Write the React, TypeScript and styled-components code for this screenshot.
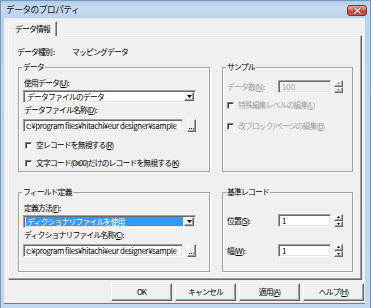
import React from "react";
import styled, { createGlobalStyle } from "styled-components";

const FONT = `"Noto Sans CJK JP", "Noto Sans", sans-serif`;

const GlobalStyle = createGlobalStyle`
  html, body { margin: 0; padding: 0; }
  body {
    background: #ffffff;
    font-family: ${FONT};
  }
`;

const Window = styled.div`
  box-sizing: border-box;
  width: 371px;
  height: 308px;
  display: flex;
  flex-direction: column;
  border: 1px solid #7a96b4;
  border-bottom: none;
  background: linear-gradient(180deg, #b1cbe8 0px, #c6dbf1 7px, #bcd3ec 17px, #c3d8ef 100%);
  font-family: ${FONT};
  color: #000;
`;

const TitleBar = styled.div`
  height: 17px;
  flex: none;
  display: flex;
  align-items: center;
  justify-content: space-between;
  padding: 0 3px 0 5px;
`;

const Title = styled.span`
  font-size: 8.7px;
  letter-spacing: -0.5px;
  line-height: 12px;
  color: #111;
`;

const CloseButton = styled.div`
  box-sizing: border-box;
  width: 20px;
  height: 11px;
  margin-top: 2px;
  border: 1px solid #76322a;
  border-radius: 3px;
  background: linear-gradient(180deg, #eaa799 0%, #d77767 45%, #c2412f 55%, #cf6450 100%);
  display: flex;
  align-items: center;
  justify-content: center;
`;

const Client = styled.div`
  flex: 1;
  margin: 0 5px 5px 3px;
  background: #f0f0f0;
  display: flex;
  flex-direction: column;
  padding: 3px 1px 0 4px;
  box-shadow: 0 1px 0 #3d8db0, inset 1px 1px 0 #e4eef8;
`;

const TabStrip = styled.div`
  display: flex;
  height: 15px;
  margin-bottom: -1px;
  position: relative;
  z-index: 1;
`;

const Tab = styled.div`
  box-sizing: border-box;
  width: 49px;
  height: 15px;
  background: #f0f0f0;
  border-style: solid;
  border-width: 1px 1px 0 1px;
  border-color: #ffffff #696969 transparent #ffffff;
  box-shadow: inset -1px 0 0 #a0a0a0;
  display: flex;
  align-items: center;
  justify-content: center;
  font-size: 7.8px;
  letter-spacing: -0.8px;
  line-height: 12px;
`;

const Panel = styled.div`
  box-sizing: border-box;
  width: 354px;
  height: 245px;
  border: 1px solid;
  border-color: #ffffff #696969 #696969 #ffffff;
  box-shadow: inset -1px -1px 0 #a0a0a0;
  background: #f0f0f0;
  padding: 8px 0 0 9px;
  display: flex;
  flex-direction: column;
`;

const InfoRow = styled.div`
  display: flex;
  align-items: center;
  height: 14px;
  margin-left: -1px;
  font-size: 7.8px;
  letter-spacing: -0.8px;
`;

const InfoLabel = styled.span`
  width: 55px;
  white-space: nowrap;
`;

const InfoValue = styled.span`
  white-space: nowrap;
`;

const GroupGrid = styled.div`
  margin-top: 9px;
  display: grid;
  grid-template-columns: 192px 131px;
  grid-template-rows: 105px 80px;
  column-gap: 12px;
  row-gap: 20px;
`;

const Group = styled.div<{ $pt: number }>`
  position: relative;
  box-sizing: border-box;
  border: 1px solid #a0a0a0;
  box-shadow: inset 1px 1px 0 #ffffff, 1px 1px 0 #ffffff;
  padding: ${(p) => p.$pt}px 0 0 4px;
  display: flex;
  flex-direction: column;
  align-items: flex-start;
`;

const GroupTitle = styled.span`
  position: absolute;
  top: -7px;
  left: 3px;
  padding: 0 1px;
  background: #f0f0f0;
  font-size: 7.8px;
  letter-spacing: -0.8px;
  line-height: 12px;
  white-space: nowrap;
`;

const Key = styled.span`
  text-decoration: underline;
`;

const FieldLabel = styled.span<{ $mt?: number; $disabled?: boolean }>`
  display: block;
  height: 12px;
  line-height: 12px;
  margin-top: ${(p) => p.$mt ?? 0}px;
  margin-left: 1px;
  font-size: 7.8px;
  letter-spacing: -0.8px;
  white-space: nowrap;
  color: ${(p) => (p.$disabled ? "#a0a0a0" : "#000")};
`;

const Sunken = styled.div`
  box-sizing: border-box;
  border: 1px solid;
  border-color: #a0a0a0 #ffffff #ffffff #a0a0a0;
  box-shadow: inset 1px 1px 0 #696969, inset -1px -1px 0 #e3e3e3;
`;

const Combo = styled(Sunken)<{ $mt?: number }>`
  width: 173px;
  height: 13px;
  margin-top: ${(p) => p.$mt ?? 0}px;
  background: #ffffff;
  display: flex;
  align-items: center;
  padding: 1px;
`;

const ComboText = styled.div<{ $selected?: boolean }>`
  flex: 1;
  height: 9px;
  margin: 0 1px 0 1px;
  padding-left: 1px;
  display: flex;
  align-items: center;
  font-size: 7.8px;
  letter-spacing: -0.8px;
  white-space: nowrap;
  overflow-x: clip;
  background: ${(p) => (p.$selected ? "#3399ff" : "transparent")};
  color: ${(p) => (p.$selected ? "#ffffff" : "#000")};
`;

const Raised = styled.div`
  box-sizing: border-box;
  background: #f0f0f0;
  border: 1px solid;
  border-color: #ffffff #696969 #696969 #ffffff;
  box-shadow: inset -1px -1px 0 #a0a0a0;
  display: flex;
  align-items: center;
  justify-content: center;
`;

const ComboButton = styled(Raised)`
  width: 10px;
  height: 9px;
`;

const PathRow = styled.div<{ $mt?: number }>`
  display: flex;
  gap: 4px;
  margin-top: ${(p) => p.$mt ?? 0}px;
`;

const PathInput = styled(Sunken)`
  width: 160px;
  height: 13px;
  background: #ffffff;
  padding: 0 0 0 2px;
  display: flex;
  align-items: center;
  font-size: 7.9px;
  letter-spacing: -0.45px;
  white-space: nowrap;
  overflow-x: clip;
`;

const BrowseButton = styled(Raised)`
  width: 9px;
  height: 13px;
  padding-top: 5px;
`;

const CheckRow = styled.div<{ $mt?: number; $indent?: number; $disabled?: boolean }>`
  display: flex;
  align-items: center;
  height: 12px;
  gap: 4px;
  margin-top: ${(p) => p.$mt ?? 0}px;
  margin-left: ${(p) => p.$indent ?? 0}px;
  color: ${(p) => (p.$disabled ? "#a0a0a0" : "#000")};
`;

const CheckBox = styled.span<{ $disabled?: boolean }>`
  box-sizing: border-box;
  width: 7px;
  height: 7px;
  border: 1px solid;
  border-color: #808080 #ffffff #ffffff #808080;
  box-shadow: inset 1px 1px 0 #404040;
  background: ${(p) => (p.$disabled ? "#f0f0f0" : "#ffffff")};
`;

const CheckText = styled.span`
  font-size: 7.8px;
  letter-spacing: -0.85px;
  line-height: 12px;
  white-space: nowrap;
`;

const SpinRow = styled.div<{ $mt?: number }>`
  display: flex;
  align-items: center;
  height: 13px;
  margin-top: ${(p) => p.$mt ?? 0}px;
`;

const SpinLabel = styled.span<{ $disabled?: boolean }>`
  width: 51px;
  font-size: 7.8px;
  letter-spacing: -0.8px;
  line-height: 12px;
  white-space: nowrap;
  color: ${(p) => (p.$disabled ? "#a0a0a0" : "#000")};
`;

const SpinInput = styled(Sunken)<{ $disabled?: boolean }>`
  width: 53px;
  height: 13px;
  padding-left: 3px;
  display: flex;
  align-items: center;
  background: ${(p) => (p.$disabled ? "#f0f0f0" : "#ffffff")};
  color: ${(p) => (p.$disabled ? "#a0a0a0" : "#000")};
  font-size: 7.8px;
`;

const SpinButtons = styled.div`
  display: flex;
  flex-direction: column;
  width: 9px;
  height: 13px;
  margin-left: 3px;
`;

const SpinButton = styled(Raised)`
  flex: 1;
`;

const ButtonBar = styled.div`
  display: flex;
  justify-content: flex-end;
  gap: 3px;
  margin-top: 3px;
`;

const DialogButton = styled(Raised)`
  width: 61px;
  height: 18px;
  font-size: 7.8px;
  letter-spacing: -0.8px;
  line-height: 12px;
  white-space: nowrap;
`;

const Arrow = ({ up = false, color = "#000", w = 5, h = 3 }: { up?: boolean; color?: string; w?: number; h?: number }) => (
  <svg width={w} height={h} viewBox={`0 0 ${w} ${h}`}>
    <polygon
      points={up ? `0,${h} ${w},${h} ${w / 2},0` : `0,0 ${w},0 ${w / 2},${h}`}
      fill={color}
    />
  </svg>
);

const Dots = () => (
  <svg width="5" height="1" viewBox="0 0 5 1">
    <rect x="0" y="0" width="1" height="1" fill="#000" />
    <rect x="2" y="0" width="1" height="1" fill="#000" />
    <rect x="4" y="0" width="1" height="1" fill="#000" />
  </svg>
);

const Spinner = ({ value, disabled = false }: { value: string; disabled?: boolean }) => (
  <>
    <SpinInput $disabled={disabled}>{value}</SpinInput>
    <SpinButtons>
      <SpinButton>
        <Arrow up w={3} h={2} color={disabled ? "#8a8a8a" : "#000"} />
      </SpinButton>
      <SpinButton>
        <Arrow w={3} h={2} color={disabled ? "#8a8a8a" : "#000"} />
      </SpinButton>
    </SpinButtons>
  </>
);

const PATH = "c:¥program files¥hitachi¥eur designer¥sample";

export default function App() {
  return (
    <>
      <GlobalStyle />
      <Window>
        <TitleBar>
          <Title>データのプロパティ</Title>
          <CloseButton>
            <svg width="9" height="7" viewBox="0 0 9 7">
              <path d="M1.5 0.8 L7.5 6.2 M7.5 0.8 L1.5 6.2" stroke="#5a1d16" strokeWidth="2.6" strokeLinecap="round" />
              <path d="M1.5 0.8 L7.5 6.2 M7.5 0.8 L1.5 6.2" stroke="#ffffff" strokeWidth="1.5" strokeLinecap="round" />
            </svg>
          </CloseButton>
        </TitleBar>
        <Client>
          <TabStrip>
            <Tab>データ情報</Tab>
          </TabStrip>
          <Panel>
            <InfoRow>
              <InfoLabel>データ種別 :</InfoLabel>
              <InfoValue>マッピングデータ</InfoValue>
            </InfoRow>
            <GroupGrid>
              <Group $pt={9}>
                <GroupTitle>データ</GroupTitle>
                <FieldLabel>
                  使用データ(<Key>U</Key>):
                </FieldLabel>
                <Combo $mt={1}>
                  <ComboText>データファイルのデータ</ComboText>
                  <ComboButton>
                    <Arrow />
                  </ComboButton>
                </Combo>
                <FieldLabel $mt={1}>
                  データファイル名称(<Key>D</Key>):
                </FieldLabel>
                <PathRow $mt={3}>
                  <PathInput>{PATH}</PathInput>
                  <BrowseButton>
                    <Dots />
                  </BrowseButton>
                </PathRow>
                <CheckRow $mt={7} $indent={2}>
                  <CheckBox />
                  <CheckText>
                    空レコードを無視する(<Key>R</Key>)
                  </CheckText>
                </CheckRow>
                <CheckRow $mt={6} $indent={2}>
                  <CheckBox />
                  <CheckText>
                    文字コード(0x00)だけのレコードを無視する(<Key>K</Key>)
                  </CheckText>
                </CheckRow>
              </Group>

              <Group $pt={12}>
                <GroupTitle>サンプル</GroupTitle>
                <SpinRow>
                  <SpinLabel $disabled>
                    データ数(<Key>N</Key>):
                  </SpinLabel>
                  <Spinner value="100" disabled />
                </SpinRow>
                <CheckRow $mt={6} $disabled>
                  <CheckBox $disabled />
                  <CheckText>
                    特殊編集レベルの編集(<Key>L</Key>)
                  </CheckText>
                </CheckRow>
                <CheckRow $mt={9} $disabled>
                  <CheckBox $disabled />
                  <CheckText>
                    改ブロック/ページの編集(<Key>B</Key>)
                  </CheckText>
                </CheckRow>
              </Group>

              <Group $pt={9}>
                <GroupTitle>フィールド定義</GroupTitle>
                <FieldLabel>
                  定義方法(<Key>F</Key>):
                </FieldLabel>
                <Combo $mt={1}>
                  <ComboText $selected>ディクショナリファイルを使用</ComboText>
                  <ComboButton>
                    <Arrow />
                  </ComboButton>
                </Combo>
                <FieldLabel $mt={1}>
                  ディクショナリファイル名称(<Key>C</Key>):
                </FieldLabel>
                <PathRow $mt={3}>
                  <PathInput>{PATH}</PathInput>
                  <BrowseButton>
                    <Dots />
                  </BrowseButton>
                </PathRow>
              </Group>

              <Group $pt={21}>
                <GroupTitle>基準レコード</GroupTitle>
                <SpinRow>
                  <SpinLabel>
                    位置(<Key>S</Key>):
                  </SpinLabel>
                  <Spinner value="1" />
                </SpinRow>
                <SpinRow $mt={17}>
                  <SpinLabel>
                    幅(<Key>W</Key>):
                  </SpinLabel>
                  <Spinner value="1" />
                </SpinRow>
              </Group>
            </GroupGrid>
          </Panel>
          <ButtonBar>
            <DialogButton>OK</DialogButton>
            <DialogButton>キャンセル</DialogButton>
            <DialogButton>
              適用(<Key>A</Key>)
            </DialogButton>
            <DialogButton>
              ヘルプ(<Key>H</Key>)
            </DialogButton>
          </ButtonBar>
        </Client>
      </Window>
    </>
  );
}
